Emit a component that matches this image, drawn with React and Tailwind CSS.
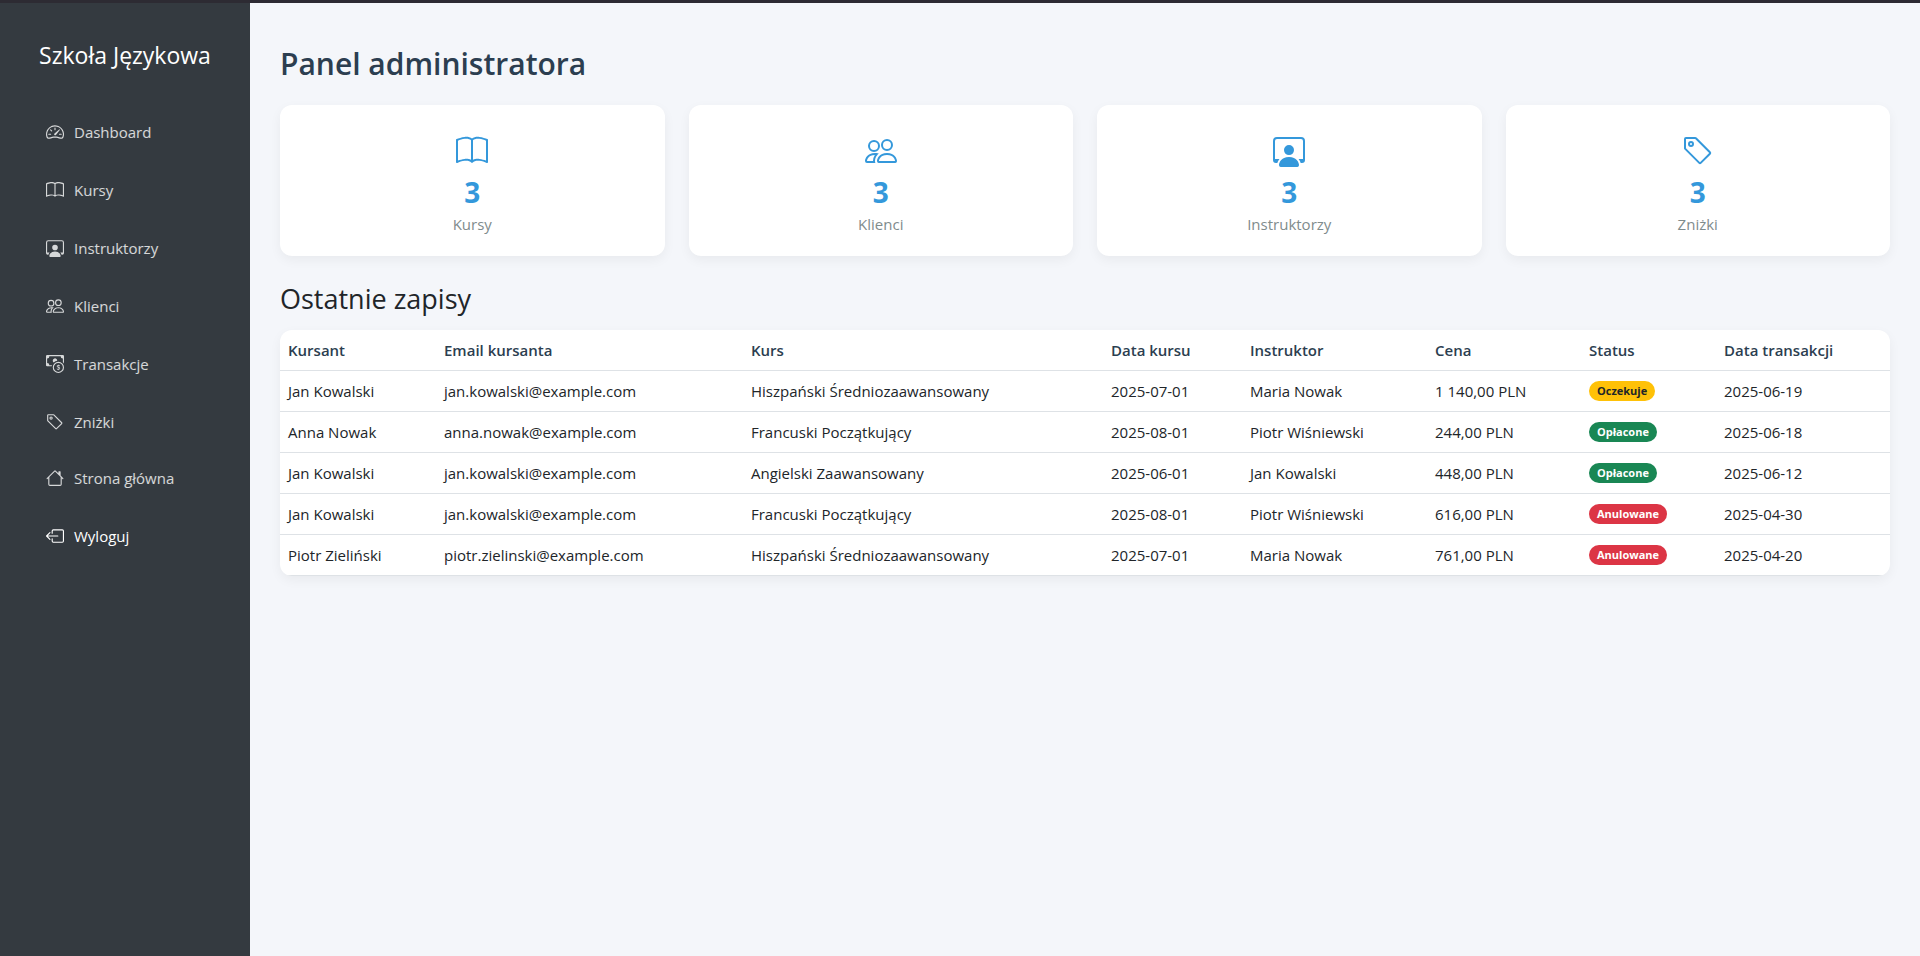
import {
  BsBook,
  BsBoxArrowLeft,
  BsCashCoin,
  BsHouse,
  BsPeople,
  BsPersonWorkspace,
  BsSpeedometer2,
  BsTag,
} from "react-icons/bs";

const sections = [
  { label: "Dashboard", Icon: BsSpeedometer2 },
  { label: "Kursy", Icon: BsBook },
  { label: "Instruktorzy", Icon: BsPersonWorkspace },
  { label: "Klienci", Icon: BsPeople },
  { label: "Transakcje", Icon: BsCashCoin },
  { label: "Zniżki", Icon: BsTag },
];

const stats = [
  { label: "Kursy", value: 3, Icon: BsBook },
  { label: "Klienci", value: 3, Icon: BsPeople },
  { label: "Instruktorzy", value: 3, Icon: BsPersonWorkspace },
  { label: "Zniżki", value: 3, Icon: BsTag },
];

const columns = [
  { label: "Kursant", width: "w-[156px]" },
  { label: "Email kursanta", width: "w-[307px]" },
  { label: "Kurs", width: "w-[360px]" },
  { label: "Data kursu", width: "w-[139px]" },
  { label: "Instruktor", width: "w-[185px]" },
  { label: "Cena", width: "w-[154px]" },
  { label: "Status", width: "w-[135px]" },
  { label: "Data transakcji", width: "w-[174px]" },
];

const enrollments = [
  ["Jan Kowalski", "jan.kowalski@example.com", "Hiszpański Średniozaawansowany", "2025-07-01", "Maria Nowak", "1 140,00 PLN", "Oczekuje", "2025-06-19"],
  ["Anna Nowak", "anna.nowak@example.com", "Francuski Początkujący", "2025-08-01", "Piotr Wiśniewski", "244,00 PLN", "Opłacone", "2025-06-18"],
  ["Jan Kowalski", "jan.kowalski@example.com", "Angielski Zaawansowany", "2025-06-01", "Jan Kowalski", "448,00 PLN", "Opłacone", "2025-06-12"],
  ["Jan Kowalski", "jan.kowalski@example.com", "Francuski Początkujący", "2025-08-01", "Piotr Wiśniewski", "616,00 PLN", "Anulowane", "2025-04-30"],
  ["Piotr Zieliński", "piotr.zielinski@example.com", "Hiszpański Średniozaawansowany", "2025-07-01", "Maria Nowak", "761,00 PLN", "Anulowane", "2025-04-20"],
];

const statusStyles = {
  Oczekuje: "bg-[#ffc107] text-[#212529]",
  Opłacone: "bg-[#198754] text-white",
  Anulowane: "bg-[#dc3545] text-white",
};

function NavLink({ label, Icon }) {
  return (
    <a href="#" className="flex h-[42px] items-center gap-[10px] text-[15px] text-white/80 hover:text-white">
      <Icon className="size-[18px]" aria-hidden="true" />
      {label}
    </a>
  );
}

function Sidebar() {
  return (
    <aside className="w-[250px] shrink-0 bg-[#343a40]">
      <div className="pt-8 text-center text-[23px] leading-10 text-white">Szkoła Językowa</div>
      <nav className="mt-9 px-[46px]">
        <div className="flex flex-col gap-4">
          {sections.map((item) => (
            <NavLink key={item.label} {...item} />
          ))}
        </div>
        <div className="mt-[14px] flex flex-col gap-4">
          <NavLink label="Strona główna" Icon={BsHouse} />
          <button type="button" className="flex h-[42px] items-center gap-[10px] text-[15px] text-white">
            <BsBoxArrowLeft className="size-[18px]" aria-hidden="true" />
            Wyloguj
          </button>
        </div>
      </nav>
    </aside>
  );
}

function StatCard({ label, value, Icon }) {
  return (
    <div className="flex flex-col items-center rounded-xl bg-white pt-[30px] pb-5 shadow-[0_4px_12px_rgba(0,0,0,0.05)]">
      <Icon className="size-8 text-[#3498db]" aria-hidden="true" />
      <div className="mt-[5px] text-[28px] leading-10 font-bold text-[#3498db]">{value}</div>
      <div className="text-[15px] leading-6 text-[#7f8c8d]">{label}</div>
    </div>
  );
}

function EnrollmentsTable() {
  return (
    <div className="overflow-hidden rounded-xl bg-white shadow-[0_4px_12px_rgba(0,0,0,0.05)]">
      <table className="w-full table-fixed border-separate border-spacing-0 text-left text-[15px] leading-6 text-[#212529]">
        <thead>
          <tr className="text-[#2c3e50]">
            {columns.map(({ label, width }) => (
              <th key={label} scope="col" className={`border-b border-[#dee2e6] p-2 font-semibold ${width}`}>
                {label}
              </th>
            ))}
          </tr>
        </thead>
        <tbody>
          {enrollments.map((row, i) => (
            <tr key={i}>
              {row.map((cell, j) => (
                <td key={j} className="border-b border-[#dee2e6] p-2">
                  {statusStyles[cell] ? (
                    <span className={`block w-fit rounded-full px-2 text-[11px] leading-5 font-bold ${statusStyles[cell]}`}>
                      {cell}
                    </span>
                  ) : (
                    cell
                  )}
                </td>
              ))}
            </tr>
          ))}
        </tbody>
      </table>
    </div>
  );
}

export default function App() {
  return (
    <div className="flex min-h-screen flex-col border-t-[3px] border-[#2d2b33] bg-[#f4f6fa] font-['Open_Sans','Noto_Sans',sans-serif]">
      <div className="flex grow">
        <Sidebar />
        <main className="min-w-0 grow px-[30px] pt-10">
          <h1 className="text-[30px] leading-[42px] font-semibold text-[#2c3e50]">Panel administratora</h1>
          <div className="mt-5 grid grid-cols-4 gap-6">
            {stats.map((stat) => (
              <StatCard key={stat.label} {...stat} />
            ))}
          </div>
          <h2 className="mt-[26px] mb-[14px] text-[27px] leading-[34px] text-[#212529]">Ostatnie zapisy</h2>
          <EnrollmentsTable />
        </main>
      </div>
    </div>
  );
}
